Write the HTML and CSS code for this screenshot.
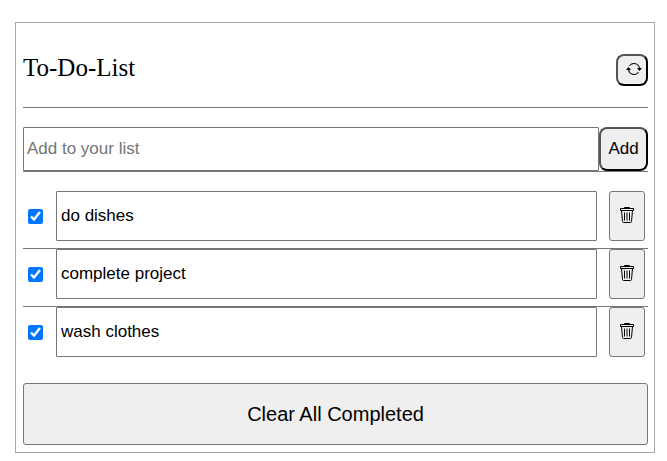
FILE: index.html
```html
<!DOCTYPE html>
<html lang="en">
<head>
<meta charset="utf-8">
<meta name="viewport" content="width=device-width, initial-scale=1">
<title>To-Do-List</title>
<link rel="stylesheet" href="styles.css">
</head>
<body>
<svg class="sprite" aria-hidden="true">
  <symbol id="trash" viewBox="0 0 16 18">
    <path d="M5.5 2V1.500h5V2M1.500 2.500h13v2h-13zM2.500 4.500l1 11q.1 1 1 1h7q.9 0 1-1l1-11M5.500 6.500v8M8 6.500v8M10.500 6.500v8" fill="none" stroke="currentColor"/>
  </symbol>
</svg>
<main class="card">
  <header class="header">
    <h1 class="title">To-Do-List</h1>
    <button class="raised refresh" type="button" aria-label="Refresh">
      <svg class="refresh-icon" viewBox="0 0 16 16" aria-hidden="true">
        <path d="M11.534 7h3.932a.25.25 0 0 1 .192.410l-1.966 2.360a.25.25 0 0 1-.384 0l-1.966-2.360a.25.25 0 0 1 .192-.410zm-11 2h3.932a.25.25 0 0 0 .192-.410L2.692 6.230a.25.25 0 0 0-.384 0L.342 8.590A.25.25 0 0 0 .534 9z"/>
        <path d="M8 3c-1.552 0-2.940.707-3.857 1.818a.5.5 0 1 1-.771-.636A6.002 6.002 0 0 1 13.917 7H12.900A5.002 5.002 0 0 0 8 3zM3.100 9a5.002 5.002 0 0 0 8.757 2.182.5.5 0 1 1 .771.636A6.002 6.002 0 0 1 2.083 9H3.100z"/>
      </svg>
    </button>
  </header>
  <form class="add">
    <input class="box add-input" type="text" placeholder="Add to your list" aria-label="Add to your list">
    <button class="raised add-button" type="button">Add</button>
  </form>
  <ul class="list">
    <li class="item">
      <input class="check" type="checkbox" checked aria-label="do dishes completed">
      <input class="box task" type="text" value="do dishes" aria-label="Task 1">
      <button class="flat delete" type="button" aria-label="Delete do dishes"><svg class="trash-icon"><use href="#trash"/></svg></button>
    </li>
    <li class="item">
      <input class="check" type="checkbox" checked aria-label="complete project completed">
      <input class="box task" type="text" value="complete project" aria-label="Task 2">
      <button class="flat delete" type="button" aria-label="Delete complete project"><svg class="trash-icon"><use href="#trash"/></svg></button>
    </li>
    <li class="item">
      <input class="check" type="checkbox" checked aria-label="wash clothes completed">
      <input class="box task" type="text" value="wash clothes" aria-label="Task 3">
      <button class="flat delete" type="button" aria-label="Delete wash clothes"><svg class="trash-icon"><use href="#trash"/></svg></button>
    </li>
  </ul>
  <button class="flat clear" type="button">Clear All Completed</button>
</main>
</body>
</html>
```
FILE: styles.css
```css
* {
  box-sizing: border-box;
}

body {
  margin: 22px 12px 8px 15px;
  background: #fff;
  color: #000;
  font-family: "Liberation Serif", "Times New Roman", serif;
}

.sprite {
  display: none;
}

.card {
  padding: 0 6px 7px 7px;
  border: 1px solid #a9a5a9;
}

.header {
  display: flex;
  align-items: center;
  justify-content: space-between;
  padding: 31px 0 21px;
  border-bottom: 1px solid #767676;
}

.title {
  margin: 0 0 4px;
  font-size: 25px;
  line-height: 28px;
  font-weight: 400;
}

button,
input {
  margin: 0;
  color: #000;
  font-family: "Liberation Sans", Arial, sans-serif;
  font-size: 17px;
}

.raised {
  border: 2px outset #000;
  border-radius: 8px;
  background: #efefef;
}

.flat {
  border: 1px solid #767676;
  border-radius: 3px;
  background: #efefef;
}

.box {
  min-width: 0;
  flex: 1;
  border: 1px solid #767676;
  border-radius: 1px;
  background: #fff;
}

.refresh {
  display: flex;
  justify-content: flex-end;
  width: 32px;
  height: 32px;
  padding: 5px 4px 0 0;
}

.refresh-icon {
  width: 16px;
  height: 16px;
  fill: currentColor;
}

.add {
  display: flex;
  padding-top: 19px;
  border-bottom: 1px solid #767676;
}

.add-input {
  height: 44px;
  padding: 0 3px;
}

.add-input::placeholder {
  color: #757575;
}

.add-button {
  width: 49px;
  padding: 0;
}

.list {
  margin: 19px 0 0;
  padding: 0;
  list-style: none;
}

.item {
  display: flex;
  align-items: center;
  padding: 0 3px 7px 5px;
  border-bottom: 1px solid #767676;
}

.item:last-child {
  padding-bottom: 0;
  border-bottom: 0;
}

.check {
  width: 15px;
  height: 15px;
  margin-right: 13px;
  accent-color: #0075ff;
}

.task {
  height: 50px;
  padding: 0 4px;
}

.delete {
  display: flex;
  justify-content: center;
  width: 36px;
  height: 50px;
  margin-left: 12px;
  padding: 14px 0 0;
}

.trash-icon {
  width: 16px;
  height: 18px;
}

.clear {
  display: block;
  width: 100%;
  height: 62px;
  margin-top: 26px;
  font-size: 20px;
}
```
